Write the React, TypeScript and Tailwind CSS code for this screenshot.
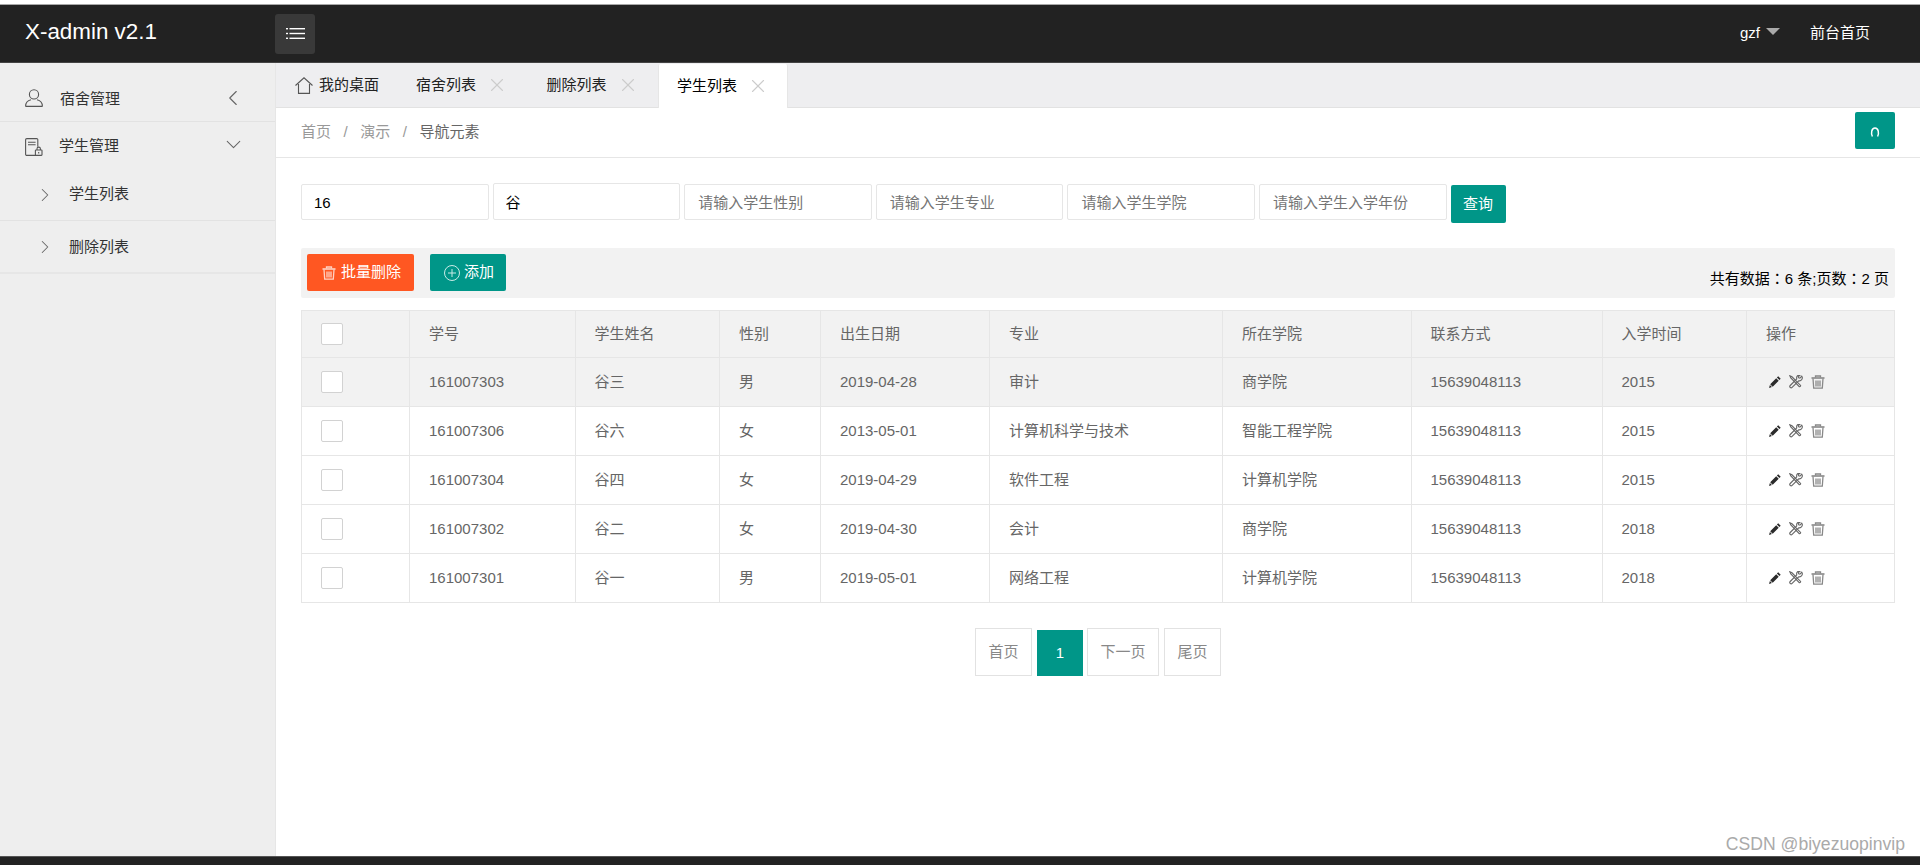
import { ChevronDown, ChevronLeft, ChevronRight, X } from "lucide-react";

const rows = [
  { id: "161007303", name: "谷三", sex: "男", birth: "2019-04-28", major: "审计", college: "商学院", year: "2015" },
  { id: "161007306", name: "谷六", sex: "女", birth: "2013-05-01", major: "计算机科学与技术", college: "智能工程学院", year: "2015" },
  { id: "161007304", name: "谷四", sex: "女", birth: "2019-04-29", major: "软件工程", college: "计算机学院", year: "2015" },
  { id: "161007302", name: "谷二", sex: "女", birth: "2019-04-30", major: "会计", college: "商学院", year: "2018" },
  { id: "161007301", name: "谷一", sex: "男", birth: "2019-05-01", major: "网络工程", college: "计算机学院", year: "2018" },
];

const placeholders = ["请输入学生性别", "请输入学生专业", "请输入学生学院", "请输入学生入学年份"];

function TrashIcon({ className }: { className?: string }) {
  return (
    <svg viewBox="0 0 14 14" className={className} fill="none" stroke="currentColor" strokeWidth="1.3">
      <path d="M0.5 3h13" strokeWidth="1.6" />
      <path d="M4.5 2.6V1h5v1.6" />
      <path d="M2 3.5l.7 9.7h8.6l.7-9.7" />
      <path d="M5 5.5v6M7 5.5v6M9 5.5v6" />
    </svg>
  );
}

function PencilIcon() {
  return (
    <svg viewBox="0 0 12 12" className="h-3 w-3 text-[#2b2b2b]" fill="currentColor">
      <path d="M9.2 0.3l2.5 2.5-1.3 1.3-2.5-2.5zM7.2 2.3l2.5 2.5-6 6-2.5-2.5zM0.9 9.1l2 2L0 12z" />
    </svg>
  );
}

function ToolsIcon() {
  return (
    <svg viewBox="0 0 14 14" className="h-[14px] w-[14px] text-[#666]" fill="none" stroke="currentColor" strokeWidth="1.1">
      <path d="M0.8 0.8l2.2 1 8.6 8.6a1.1 1.1 0 0 1-1.3 1.3L1.8 3z" />
      <path d="M12.8 1.2l-1.9 1.9-1.2-.3-.3-1.2L11.2 0a3 3 0 0 0-3.4 3.9L1.2 10.5a1.3 1.3 0 0 0 1.9 1.9l6.6-6.6a3 3 0 0 0 3.1-4.6z" />
    </svg>
  );
}

function Input({ value, placeholder, className }: { value?: string; placeholder?: string; className?: string }) {
  return (
    <input
      readOnly
      value={value}
      placeholder={placeholder}
      className={`w-[187.6px] rounded-[2px] border border-[#e6e6e6] bg-white text-[15px] text-black outline-none placeholder:text-[#757575] ${className ?? ""}`}
    />
  );
}

function Tab({ label, active }: { label: string; active?: boolean }) {
  return (
    <div
      className={`flex h-[44px] items-center ${
        active
          ? "mt-px w-[129.5px] rounded-t-[2px] border-x border-[#e6e6e6] bg-white pl-[18px] text-black"
          : "w-[130.5px] pl-[19px] text-[#222]"
      }`}
    >
      <span>{label}</span>
      <X className="ml-[10px] h-[22px] w-[22px] shrink-0 text-[#cccccc]" strokeWidth={1.2} />
    </div>
  );
}

function Sidebar() {
  return (
    <aside className="w-[276px] shrink-0 border-r border-[#e6e6e6] bg-[#eeeeee] text-[15px] text-[#333]">
      <div className="flex h-[59px] items-center border-b border-[#e2e2e2] pl-[25px] pr-[29px] pt-[14px]">
        <svg viewBox="0 0 18 18" className="mb-[3px] h-[18px] w-[18px] text-[#555]" fill="none" stroke="currentColor" strokeWidth="1.1">
          <circle cx="9" cy="5.4" r="4.6" />
          <path d="M0.6 17.4c0-3.8 2.6-6 5.4-6.6M17.4 17.4c0-3.8-2.6-6-5.4-6.6M0.6 17.4h16.8" />
        </svg>
        <span className="ml-[17px]">宿舍管理</span>
        <ChevronLeft className="mb-[3px] ml-auto h-[26px] w-[26px] text-[#666]" strokeWidth={1} />
      </div>
      <div className="flex h-[47px] items-center pl-[25px] pr-[29px] pt-[2px]">
        <svg viewBox="0 0 18 18" className="h-[18px] w-[18px] text-[#555]" fill="none" stroke="currentColor" strokeWidth="1.1">
          <path d="M11 17.4H1.8a1.2 1.2 0 0 1-1.2-1.2V1.8A1.2 1.2 0 0 1 1.8.6h9.8a1.2 1.2 0 0 1 1.2 1.2v7" />
          <path d="M3 4.2h7.6M3 6.8h7.6" />
          <rect x="10.4" y="12" width="6.6" height="5.4" rx=".6" />
          <path d="M12 12v-1.2a1.7 1.7 0 0 1 3.4 0V12M13.7 14v1.6" />
        </svg>
        <span className="ml-[16px]">学生管理</span>
        <ChevronDown className="mb-[4px] ml-auto h-[25px] w-[25px] text-[#666]" strokeWidth={1} />
      </div>
      <div className="flex h-[52px] items-center border-b border-[#e2e2e2] pl-[34px]">
        <ChevronRight className="h-[22px] w-[22px] text-[#666]" strokeWidth={1.1} />
        <span className="ml-[13px]">学生列表</span>
      </div>
      <div className="flex h-[53px] items-center border-b-2 border-[#e6e6e6] pl-[34px] pt-[1px]">
        <ChevronRight className="h-[22px] w-[22px] text-[#666]" strokeWidth={1.1} />
        <span className="ml-[13px]">删除列表</span>
      </div>
    </aside>
  );
}

export default function App() {
  return (
    <div className="relative flex h-[865px] w-[1920px] flex-col overflow-hidden bg-white font-['Liberation_Sans','Noto_Sans_CJK_SC',sans-serif] text-[15px]">
      <div className="h-[4px] shrink-0 bg-white" />
      <header className="flex h-[59px] shrink-0 items-center border-y border-t-[#a8a8a8] border-b-[#444] bg-[#222222] text-white">
        <div className="w-[275px] pl-[25px] pb-[3px] text-[22.4px]">X-admin v2.1</div>
        <button className="flex h-[40px] w-[40px] items-center justify-center rounded-[3px] bg-[#393939]">
          <svg viewBox="0 0 19 11" className="h-[11px] w-[19px]" fill="#fff">
            <rect x="0" y="0" width="2" height="1.4" />
            <rect x="3.5" y="0" width="15.5" height="1.4" />
            <rect x="0" y="4.8" width="2" height="1.4" />
            <rect x="3.5" y="4.8" width="15.5" height="1.4" />
            <rect x="0" y="9.6" width="2" height="1.4" />
            <rect x="3.5" y="9.6" width="15.5" height="1.4" />
          </svg>
        </button>
        <div className="ml-auto flex items-center pr-[50px]">
          <span>gzf</span>
          <span className="mb-[5px] ml-[6px] h-0 w-0 border-x-[7.5px] border-t-[7px] border-x-transparent border-t-[#aaaaaa]" />
          <span className="ml-[30px]">前台首页</span>
        </div>
      </header>

      <div className="flex min-h-0 flex-1">
        <Sidebar />
        <main className="min-w-0 flex-1">
          <div className="flex h-[45px] border-b border-[#e2e2e2] bg-[#eeeef0]">
            <div className="flex h-[44px] w-[121px] items-center pl-[19px] text-[#222]">
              <svg viewBox="0 0 18 17" className="h-[17px] w-[18px] text-[#555]" fill="none" stroke="currentColor" strokeWidth="1.1">
                <path d="M0.5 8.5L9 0.8l8.5 7.7" />
                <path d="M3.5 7v9.4h11V7" />
              </svg>
              <span className="ml-[6px]">我的桌面</span>
            </div>
            <Tab label="宿舍列表" />
            <Tab label="删除列表" />
            <Tab label="学生列表" active />
          </div>

          <div className="flex h-[50px] items-start justify-between border-b border-[#e6e6e6] pl-[25px] pr-[25px]">
            <div className="mt-[13px] flex text-[#999]">
              <span>首页</span>
              <span className="mx-[12.5px]">/</span>
              <span>演示</span>
              <span className="mx-[12.5px]">/</span>
              <span className="text-[#666]">导航元素</span>
            </div>
            <button className="mt-[4px] flex h-[37px] w-[40px] items-center justify-center rounded-[2px] bg-[#009688]">
              <svg viewBox="0 0 10 10" className="mt-[2px] h-[10px] w-[10px]" fill="none" stroke="#fff" strokeWidth="1.5">
                <path d="M2.4 9.5C.8 6.5 1.4 1 5 1s4.200 5.500 2.600 8.500" />
              </svg>
            </button>
          </div>

          <div className="pl-[25px] pr-[25px] pt-[25px]">
            <div className="flex h-[40px] items-start gap-[4px]">
              <Input value="16" className="mt-px h-[36px] pl-[12px]" />
              <Input value="谷" className="h-[37px] pl-[12px]" />
              {placeholders.map((p) => (
                <Input key={p} placeholder={p} className="mt-px h-[36px] pl-[13px]" />
              ))}
              <button className="mt-[2px] h-[38px] w-[55px] rounded-[2px] bg-[#009688] text-white">查询</button>
            </div>

            <div className="mt-[25px] flex h-[50px] items-start rounded-[2px] bg-[#f2f2f2] pl-[6px] pr-[6px] pt-[6px]">
              <button className="flex h-[37px] w-[107px] items-center rounded-[2px] bg-[#ff5722] pl-[15px] text-white">
                <TrashIcon className="h-[14px] w-[14px] text-[#ffd2c4]" />
                <span className="ml-[5px]">批量删除</span>
              </button>
              <button className="ml-[16px] flex h-[37px] w-[76px] items-center rounded-[2px] bg-[#009688] pl-[14px] text-white">
                <svg viewBox="0 0 16 16" className="h-[16px] w-[16px]" fill="none" stroke="#c9ebe6" strokeWidth="1">
                  <circle cx="8" cy="8" r="7.5" />
                  <path d="M8 4v8M4 8h8" />
                </svg>
                <span className="ml-[4px]">添加</span>
              </button>
              <span className="ml-auto mt-[13px] text-black">
                共有数据<span className="font-['Noto_Sans_CJK_TC']">：</span>6 条;页数<span className="font-['Noto_Sans_CJK_TC']">：</span>2 页
              </span>
            </div>

            <table className="mt-[12px] w-full table-fixed border-collapse text-left text-[#666]">
              <thead>
                <tr className="h-[47px] bg-[#f2f2f2]">
                  <th className="w-[108px] border border-[#e6e6e6] pl-[19px] font-normal">
                    <div className="h-[22px] w-[22px] rounded-[2px] border border-[#d2d2d2] bg-white" />
                  </th>
                  <th className="w-[165.5px] border border-[#e6e6e6] pl-[19px] font-normal">学号</th>
                  <th className="w-[144.5px] border border-[#e6e6e6] pl-[19px] font-normal">学生姓名</th>
                  <th className="w-[101px] border border-[#e6e6e6] pl-[19px] font-normal">性别</th>
                  <th className="w-[169px] border border-[#e6e6e6] pl-[19px] font-normal">出生日期</th>
                  <th className="w-[233px] border border-[#e6e6e6] pl-[19px] font-normal">专业</th>
                  <th className="w-[188.5px] border border-[#e6e6e6] pl-[19px] font-normal">所在学院</th>
                  <th className="w-[191px] border border-[#e6e6e6] pl-[19px] font-normal">联系方式</th>
                  <th className="w-[144.5px] border border-[#e6e6e6] pl-[19px] font-normal">入学时间</th>
                  <th className="border border-[#e6e6e6] pl-[19px] font-normal">操作</th>
                </tr>
              </thead>
              <tbody>
                {rows.map((r, i) => (
                  <tr key={r.id} className={`h-[49px] ${i === 0 ? "bg-[#f2f2f2]" : "bg-white"}`}>
                    <td className="border border-[#e6e6e6] pl-[19px]">
                      <div className="h-[22px] w-[22px] rounded-[2px] border border-[#d2d2d2] bg-white" />
                    </td>
                    <td className="border border-[#e6e6e6] pl-[19px]">{r.id}</td>
                    <td className="border border-[#e6e6e6] pl-[19px]">{r.name}</td>
                    <td className="border border-[#e6e6e6] pl-[19px]">{r.sex}</td>
                    <td className="border border-[#e6e6e6] pl-[19px]">{r.birth}</td>
                    <td className="border border-[#e6e6e6] pl-[19px]">{r.major}</td>
                    <td className="border border-[#e6e6e6] pl-[19px]">{r.college}</td>
                    <td className="border border-[#e6e6e6] pl-[19px]">15639048113</td>
                    <td className="border border-[#e6e6e6] pl-[19px]">{r.year}</td>
                    <td className="border border-[#e6e6e6] pl-[22px]">
                      <div className="flex items-center gap-[8px]">
                        <PencilIcon />
                        <ToolsIcon />
                        <TrashIcon className="h-[14px] w-[14px] text-[#888]" />
                      </div>
                    </td>
                  </tr>
                ))}
              </tbody>
            </table>

            <div className="mt-[25px] flex justify-center gap-[4px] text-[#888]">
              <div className="flex h-[48px] w-[57px] items-center justify-center border border-[#e2e2e2]">首页</div>
              <div className="ml-px mt-[2px] flex h-[46px] w-[46px] items-center justify-center bg-[#009688] text-white">1</div>
              <div className="flex h-[48px] w-[72px] items-center justify-center border border-[#e2e2e2]">下一页</div>
              <div className="ml-px flex h-[48px] w-[57px] items-center justify-center border border-[#e2e2e2]">尾页</div>
            </div>
          </div>
        </main>
      </div>

      <div className="h-[9px] shrink-0 border-t border-[#555] bg-[#222222]" />
      <div className="absolute bottom-[8px] right-[15px] text-[17.6px] text-[#aaaaaa]">CSDN @biyezuopinvip</div>
    </div>
  );
}
